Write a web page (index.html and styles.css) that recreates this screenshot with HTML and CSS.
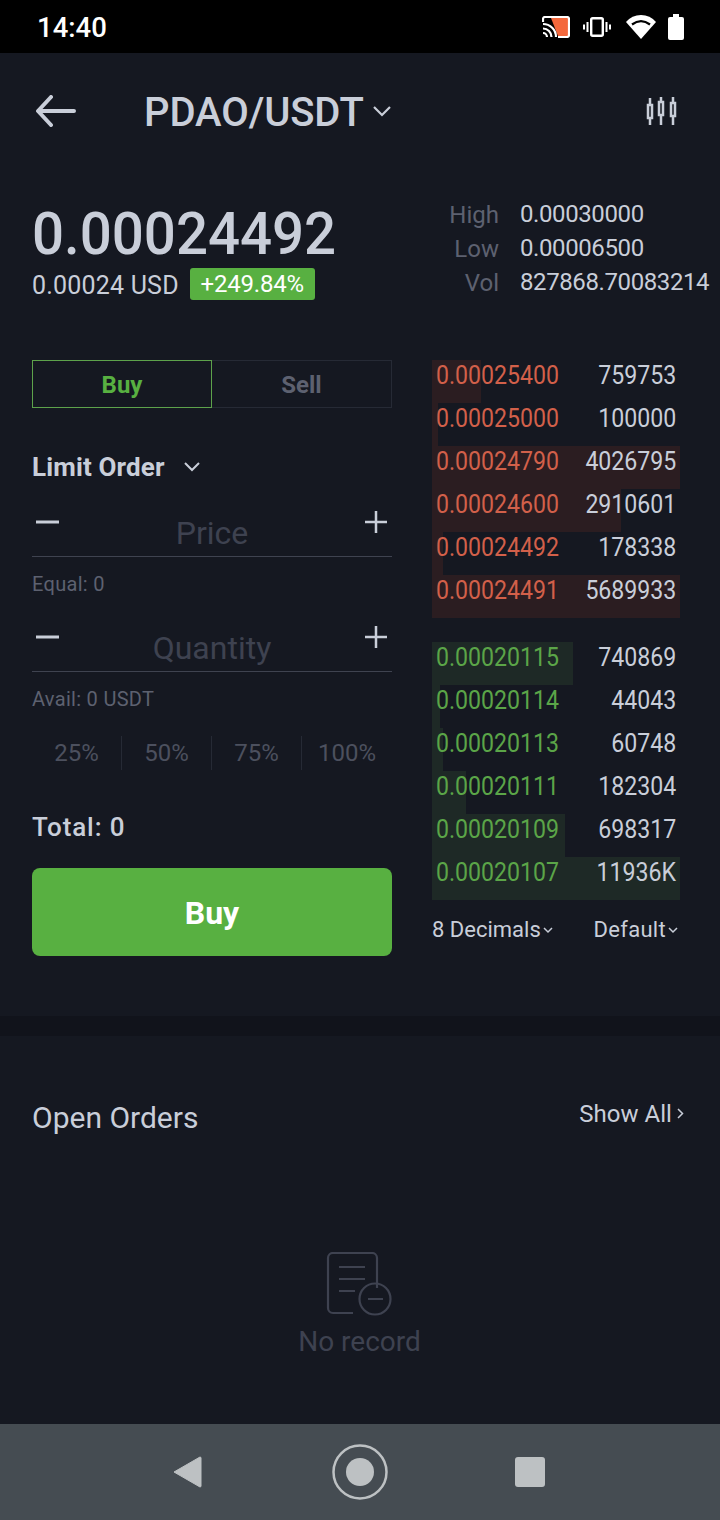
FILE: index.html
```html
<!DOCTYPE html>
<html lang="en">
<head>
<meta charset="utf-8">
<title>PDAO/USDT</title>
<link rel="stylesheet" href="styles.css">
</head>
<body>
<div class="phone">
  <div class="statusbar">
    <span class="clock">14:40</span>
    <div class="status-icons">
      <svg class="ic-cast" width="28" height="22" viewBox="0 0 28 22"><path d="M9 2h17v18H16z" fill="#f4683c"/><path d="M1 6V3a2 2 0 0 1 2-2h22a2 2 0 0 1 2 2v16a2 2 0 0 1-2 2H16" fill="none" stroke="#fff" stroke-width="2.200"/><path d="M1 8a13 13 0 0 1 13 13M1 12.500a8.500 8.500 0 0 1 8.500 8.500M1 17a4 4 0 0 1 4 4" fill="none" stroke="#fff" stroke-width="2.200"/></svg>
      <svg class="ic-vib" width="28" height="20" viewBox="0 0 28 20"><rect x="8.200" y="1.200" width="11.600" height="17.600" rx="1.500" fill="none" stroke="#fff" stroke-width="2.400"/><path d="M4.500 5v10M23.500 5v10M1 7.500v5M27 7.500v5" stroke="#fff" stroke-width="2"/></svg>
      <svg class="ic-wifi" width="30" height="25" viewBox="0 0 30 25"><path d="M15 25 0 8Q6 1 15 1t15 7z" fill="#fff"/><path d="M6 10.500Q15 3.800 24 10.500" fill="none" stroke="#000" stroke-width="2.200"/></svg>
      <svg class="ic-batt" width="16" height="26" viewBox="0 0 16 26"><path d="M5 0h6v3h3a2 2 0 0 1 2 2v19a2 2 0 0 1-2 2H2a2 2 0 0 1-2-2V5a2 2 0 0 1 2-2h3z" fill="#fff"/></svg>
    </div>
  </div>

  <main class="app">
    <header class="topbar">
      <svg class="back" width="40" height="32" viewBox="0 0 40 32"><path d="M15 2 2 16l13 14M3 16h35" fill="none" stroke="#c9ced9" stroke-width="4" stroke-linecap="round" stroke-linejoin="round"/></svg>
      <div class="pair"><span class="pair-name">PDAO/USDT</span>
        <svg width="20" height="12" viewBox="0 0 20 12"><path d="M2 2l8 8 8-8" fill="none" stroke="#c9ced9" stroke-width="2.200"/></svg>
      </div>
      <svg class="kline" width="32" height="30" viewBox="0 0 32 30"><g fill="none" stroke="#c9ced9" stroke-width="2.500"><rect x="2" y="9" width="4" height="13"/><rect x="13" y="6" width="4" height="13"/><rect x="25" y="7" width="4" height="13"/></g><path d="M4 2v7M4 22v7M15 1v5M15 19v10M27 1v6M27 20v9" stroke="#c9ced9" stroke-width="2.500"/></svg>
    </header>

    <section class="ticker">
      <div class="ticker-main">
        <div class="last">0.00024492</div>
        <div class="fiat-row"><span class="fiat">0.00024 USD</span><span class="chg">+249.84%</span></div>
      </div>
      <div class="stats">
        <span class="stat-l">High</span><span class="stat-v">0.00030000</span>
        <span class="stat-l">Low</span><span class="stat-v">0.00006500</span>
        <span class="stat-l">Vol</span><span class="stat-v">827868.70083214</span>
      </div>
    </section>

    <section class="trade">
      <div class="form">
        <div class="tabs"><div class="tab tab-on">Buy</div><div class="tab tab-off">Sell</div></div>
        <div class="order-type"><span>Limit Order</span>
          <svg width="18" height="12" viewBox="0 0 18 12"><path d="M2 2l7 7 7-7" fill="none" stroke="#c9ced9" stroke-width="2"/></svg>
        </div>
        <div class="field">
          <svg class="pm" width="24" height="24" viewBox="0 0 24 24"><path d="M0 12h23" stroke="#c9ced9" stroke-width="3"/></svg>
          <span class="ph">Price</span>
          <svg class="pm" width="24" height="24" viewBox="0 0 24 24"><path d="M1 12h22M12 1v22" stroke="#c9ced9" stroke-width="2.500"/></svg>
        </div>
        <div class="hint">Equal: 0</div>
        <div class="field field2">
          <svg class="pm" width="24" height="24" viewBox="0 0 24 24"><path d="M0 12h23" stroke="#c9ced9" stroke-width="3"/></svg>
          <span class="ph">Quantity</span>
          <svg class="pm" width="24" height="24" viewBox="0 0 24 24"><path d="M1 12h22M12 1v22" stroke="#c9ced9" stroke-width="2.500"/></svg>
        </div>
        <div class="hint">Avail: 0 USDT</div>
        <div class="pcts"><span>25%</span><span>50%</span><span>75%</span><span>100%</span></div>
        <div class="total">Total: 0</div>
        <button class="buy">Buy</button>
      </div>

      <div class="book">
        <div class="rows asks">
          <div class="row"><i class="bar" style="width:49px"></i><b>0.00025400</b><em>759753</em></div>
          <div class="row"><i class="bar" style="width:6px"></i><b>0.00025000</b><em>100000</em></div>
          <div class="row"><i class="bar" style="width:248px"></i><b>0.00024790</b><em>4026795</em></div>
          <div class="row"><i class="bar" style="width:189px"></i><b>0.00024600</b><em>2910601</em></div>
          <div class="row"><i class="bar" style="width:11px"></i><b>0.00024492</b><em>178338</em></div>
          <div class="row"><i class="bar" style="width:248px"></i><b>0.00024491</b><em>5689933</em></div>
        </div>
        <div class="rows bids">
          <div class="row"><i class="bar" style="width:141px"></i><b>0.00020115</b><em>740869</em></div>
          <div class="row"><i class="bar" style="width:8px"></i><b>0.00020114</b><em>44043</em></div>
          <div class="row"><i class="bar" style="width:11px"></i><b>0.00020113</b><em>60748</em></div>
          <div class="row"><i class="bar" style="width:34px"></i><b>0.00020111</b><em>182304</em></div>
          <div class="row"><i class="bar" style="width:133px"></i><b>0.00020109</b><em>698317</em></div>
          <div class="row"><i class="bar" style="width:248px"></i><b>0.00020107</b><em>11936K</em></div>
        </div>
        <div class="book-foot">
          <span>8 Decimals<svg width="10" height="7" viewBox="0 0 10 7"><path d="M1 1l4 4 4-4" fill="none" stroke="#c9ced9" stroke-width="1.500"/></svg></span>
          <span class="sort">Default<svg width="10" height="7" viewBox="0 0 10 7"><path d="M1 1l4 4 4-4" fill="none" stroke="#c9ced9" stroke-width="1.500"/></svg></span>
        </div>
      </div>
    </section>

    <div class="divider"></div>

    <section class="orders">
      <div class="orders-head"><h2>Open Orders</h2>
        <span class="show-all">Show All<svg width="7" height="11" viewBox="0 0 7 11"><path d="M1 1l4.500 4.500L1 10" fill="none" stroke="#c9ced9" stroke-width="1.500"/></svg></span>
      </div>
      <div class="empty">
        <svg width="66" height="66" viewBox="0 0 66 66"><g fill="none" stroke="#3e4250" stroke-width="2.200"><path d="M27 61H7a5 5 0 0 1-5-5V6a5 5 0 0 1 5-5h39a5 5 0 0 1 5 5v30"/><circle cx="49" cy="47" r="15.500"/></g><path d="M13 15h26M13 27h26M13 39h16M42 47h15" stroke="#3e4250" stroke-width="2.200"/></svg>
        <span>No record</span>
      </div>
    </section>
  </main>

  <nav class="navbar">
    <svg width="32" height="34" viewBox="0 0 32 34"><path d="M2 17 28 2a1 1 0 0 1 1 1v28a1 1 0 0 1-1 1z" fill="#bdc1c3" stroke="#bdc1c3" stroke-width="1" stroke-linejoin="round"/></svg>
    <svg width="56" height="56" viewBox="0 0 56 56"><circle cx="28" cy="28" r="26.500" fill="none" stroke="#bdc1c3" stroke-width="2.500"/><circle cx="28" cy="28" r="14" fill="#bdc1c3"/></svg>
    <div class="stop"></div>
  </nav>
</div>
</body>
</html>
```
FILE: styles.css
```css
* { box-sizing: border-box; }
html, body { margin: 0; padding: 0; }
body { background: #151821; font-family: Roboto, "Liberation Sans", sans-serif; }
.phone { width: 720px; height: 1520px; display: flex; flex-direction: column; overflow: hidden; }

.statusbar { height: 53px; flex: none; background: #000; display: flex; align-items: center; justify-content: space-between; padding: 0 36px 0 37px; }
.clock { color: #fff; font-size: 27.500px; font-weight: 500; position: relative; top: 1px; }
.status-icons { display: flex; align-items: center; }
.ic-cast { margin-right: 13px; }
.ic-vib { margin-right: 15px; }
.ic-wifi { margin-right: 12px; }

.app { flex: 1; min-height: 0; display: flex; flex-direction: column; background: #151821; }
.topbar { height: 116px; flex: none; display: flex; align-items: center; padding: 0 42px 0 36px; }
.pair { display: flex; align-items: center; margin-left: 68px; flex: 1; color: #c9ced9; }
.pair-name { font-size: 40px; font-weight: 500; letter-spacing: -.1px; margin-right: 8px; line-height: 48px; padding-top: 3px; }

.ticker { height: 191px; flex: none; display: flex; justify-content: space-between; padding: 0 12px 0 32px; }
.last { color: #c9ced9; font-size: 60px; line-height: 60px; margin-top: 35px; font-weight: 500; transform: scaleX(.94); transform-origin: left center; }
.fiat-row { display: flex; align-items: center; margin-top: 4px; }
.fiat { color: #c9ced9; font-size: 25px; letter-spacing: .2px; padding-top: 2px; }
.chg { margin-left: 11px; width: 125px; height: 32px; border-radius: 3px; background: #58b041; color: #fff; font-size: 24px; display: flex; align-items: center; justify-content: center; letter-spacing: -.2px; }
.stats { display: grid; grid-template-columns: 60px 188px; column-gap: 21px; margin-top: 28px; align-content: start; color: #c9ced9; font-size: 24px; }
.stats > span { height: 34px; line-height: 34px; }
.stat-l { text-align: right; color: #5d6170; position: relative; top: 1px; }
.stat-v { white-space: nowrap; letter-spacing: -.4px; }

.trade { flex: none; height: 656px; display: flex; padding-left: 32px; }
.form { width: 360px; display: flex; flex-direction: column; }
.tabs { display: flex; height: 48px; }
.tab { width: 180px; display: flex; align-items: center; justify-content: center; font-size: 24px; font-weight: 700; padding-top: 2px; }
.tab-on { border: 1px solid #5da24b; color: #58b041; }
.tab-off { border: 1px solid #262a35; border-left: 0; color: #5d6170; }
.order-type { display: flex; align-items: center; color: #c9ced9; font-size: 26px; font-weight: 700; margin-top: 44px; height: 30px; letter-spacing: .15px; }
.order-type svg { margin-left: 18px; }
.field { margin-top: 17px; height: 58px; padding-top: 11px; display: flex; justify-content: space-between; border-bottom: 1px solid #3f4350; position: relative; }
.field2 { margin-top: 18px; }
.pm { flex: none; }
.ph { color: #3e4250; font-size: 32px; position: absolute; left: 0; right: 0; text-align: center; top: 15px; }
.field .pm:last-child { margin-right: 4px; }
.field .pm:first-child { margin-left: 4px; }
.hint { color: #5d6170; font-size: 20px; letter-spacing: .3px; margin-top: 16px; height: 23px; line-height: 23px; }
.pcts { display: flex; margin-top: 25px; height: 34px; }
.pcts span { width: 90px; display: flex; align-items: center; justify-content: center; color: #4c505e; font-size: 24px; border-right: 1px solid #262a35; }
.pcts span:last-child { border-right: 0; }
.total { color: #c9ced9; font-size: 26px; font-weight: 500; letter-spacing: .9px; margin-top: 42px; height: 30px; line-height: 30px; }
.buy { margin-top: 26px; height: 88px; width: 360px; border: 0; border-radius: 8px; background: #58b041; color: #fff; font-family: inherit; font-size: 32px; font-weight: 700; padding: 2px 0 0; }

.book { width: 248px; margin-left: 40px; display: flex; flex-direction: column; }
.rows { display: flex; flex-direction: column; }
.bids { margin-top: 24px; }
.row { position: relative; height: 43px; display: flex; justify-content: space-between; padding: 0 4px; font-size: 25px; line-height: 31px; }
.row .bar { position: absolute; left: 0; top: 0; bottom: 0; }
.asks .bar { background: #2b1d21; }
.bids .bar { background: #1e2926; }
.row b, .row em { position: relative; font-weight: 400; font-style: normal; transform: scaleX(.925); }
.row b { transform-origin: left center; }
.row em { transform-origin: right center; }
.asks b { color: #d2604a; }
.bids b { color: #5ba548; }
.row em { color: #c9ced9; }
.book-foot { display: flex; justify-content: space-between; color: #c9ced9; font-size: 22px; margin-top: 17px; padding-right: 2px; }
.book-foot svg { margin-left: 2px; vertical-align: 3px; }
.sort { letter-spacing: .3px; }

.divider { height: 20px; flex: none; background: #11131b; }
.orders { flex: 1; padding: 0 36px 0 32px; display: flex; flex-direction: column; }
.orders-head { display: flex; justify-content: space-between; margin-top: 64px; align-items: flex-start; }
h2 { margin: 0; color: #c9ced9; font-size: 30px; font-weight: 400; line-height: 36px; }
.show-all { color: #c9ced9; font-size: 24px; line-height: 28px; letter-spacing: .05px; }
.show-all svg { margin-left: 5px; vertical-align: 3px; }
.empty { margin-top: 116px; display: flex; flex-direction: column; align-items: center; color: #3e4250; font-size: 28px; margin-right: -3px; }
.empty svg { margin-left: -2px; }
.empty span { margin-top: 7px; }

.navbar { flex: none; height: 96px; background: #454c52; display: flex; align-items: center; padding-left: 172px; }
.navbar svg:nth-child(2) { margin-left: 128px; }
.stop { width: 30px; height: 30px; background: #bdc1c3; border-radius: 3px; margin-left: 127px; }
```
